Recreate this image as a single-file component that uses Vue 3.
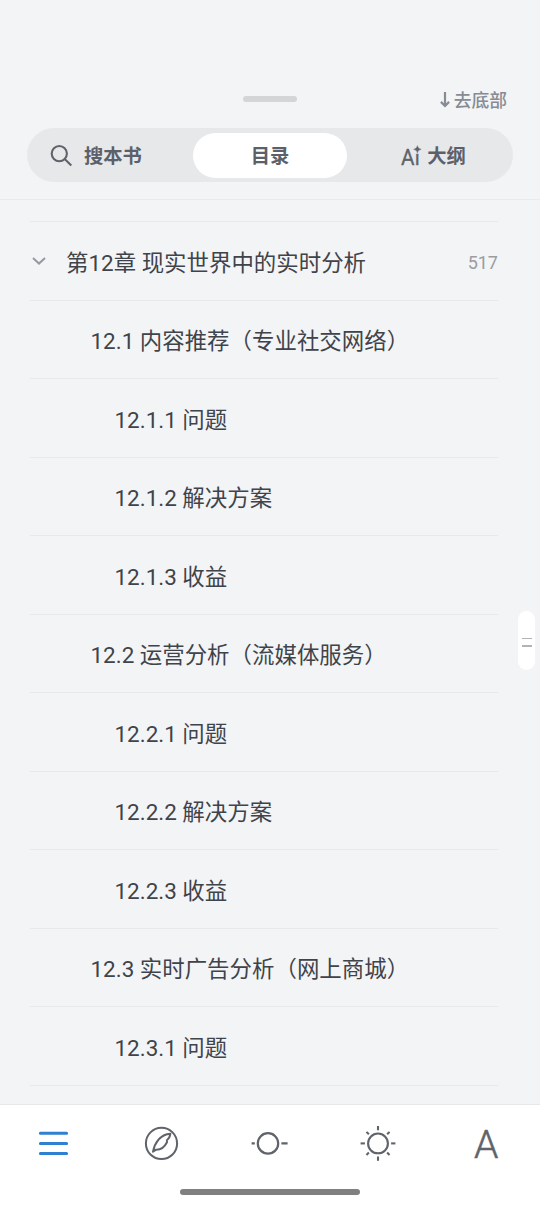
<script setup>

import { ref } from 'vue';

const activeTab = ref('toc');

const chapters = ref([
    { title: '第12章 现实世界中的实时分析', level: 1, page: 517 },
    { title: '12.1 内容推荐（专业社交网络）', level: 2 },
    { title: '12.1.1 问题', level: 3 },
    { title: '12.1.2 解决方案', level: 3 },
    { title: '12.1.3 收益', level: 3 },
    { title: '12.2 运营分析（流媒体服务）', level: 2 },
    { title: '12.2.1 问题', level: 3 },
    { title: '12.2.2 解决方案', level: 3 },
    { title: '12.2.3 收益', level: 3 },
    { title: '12.3 实时广告分析（网上商城）', level: 2 },
    { title: '12.3.1 问题', level: 3 },
]);

const rays = [0, 45, 90, 135, 180, 225, 270, 315];

</script>

<template>
    <div class="reader" lang="zh-CN">
        <header class="head">
            <div class="top">
                <span class="grip"></span>
                <button class="to-bottom">
                    <svg width="10" height="17" viewBox="0 0 10 17">
                        <path d="M5 1V15M0.9 10.9L5 15L9.1 10.9" fill="none" stroke="#868b94" stroke-width="2.2" />
                    </svg>
                    <span>去底部</span>
                </button>
            </div>
            <nav class="tabs">
                <button class="tab search" :class="{ active: activeTab === 'search' }" @click="activeTab = 'search'">
                    <svg width="22" height="22" viewBox="0 0 22 22" fill="none" stroke="#5f646b" stroke-width="2.1">
                        <circle cx="9.3" cy="8.6" r="7.6" />
                        <path d="M14.7 14L21.3 20.6" />
                    </svg>
                    <span>搜本书</span>
                </button>
                <button class="tab" :class="{ active: activeTab === 'toc' }" @click="activeTab = 'toc'">
                    <span>目录</span>
                </button>
                <button class="tab outline" :class="{ active: activeTab === 'outline' }" @click="activeTab = 'outline'">
                    <svg width="20" height="20" viewBox="0 0 20 20">
                        <text class="ai" x="0" y="19" textLength="13.5" lengthAdjust="spacingAndGlyphs">A</text>
                        <text class="ai small" x="13.8" y="19">ı</text>
                        <path d="M16.4 -0.4Q16.9 2.7 20.2 3.3Q16.9 3.9 16.4 7Q15.9 3.9 12.6 3.3Q15.9 2.7 16.4 -0.4Z" fill="#5f646b" stroke="#5f646b" stroke-width="0.4" />
                    </svg>
                    <span>大纲</span>
                </button>
            </nav>
        </header>

        <main class="list">
            <div v-for="(item, index) in chapters" :key="index" class="row" :class="'level-' + item.level">
                <svg v-if="item.level === 1" class="arrow" width="14" height="9" viewBox="0 0 14 9">
                    <path d="M1 2L7 7.6L13 2" fill="none" stroke="#969aa0" stroke-width="2" />
                </svg>
                <span class="title">{{ item.title }}</span>
                <span v-if="item.page" class="page">{{ item.page }}</span>
            </div>
        </main>

        <div class="scroller"><i></i><i></i></div>

        <footer class="foot">
            <div class="tools">
                <button>
                    <svg width="36" height="36" viewBox="0 0 36 36" stroke="#2f80d0" stroke-width="3" stroke-linecap="round">
                        <path d="M4.4 8.3H30.6M4.4 18.4H30.6M4.4 28.5H30.6" />
                    </svg>
                </button>
                <button>
                    <svg width="36" height="36" viewBox="0 0 36 36" fill="none" stroke="#5f646b" stroke-width="2">
                        <circle cx="17.5" cy="18.4" r="15.6" />
                        <path d="M9 26.7C10.5 18.9 15.8 9.2 26.4 8.7C26 11.6 24.8 13.8 22.9 15.2L23 17.2C20.6 21.9 16.8 24.8 12.2 24.7Z" stroke-linejoin="round" />
                    </svg>
                </button>
                <button>
                    <svg width="38" height="36" viewBox="0 0 38 36" fill="none" stroke="#5f646b" stroke-width="2.2">
                        <circle cx="18" cy="18.4" r="10.2" />
                        <path d="M1.6 18.4H4.8M31.4 18.4H37.6" />
                    </svg>
                </button>
                <button>
                    <svg width="36" height="36" viewBox="-19 -18.4 36 36" fill="none" stroke="#5f646b" stroke-width="2.1">
                        <circle cx="0" cy="0" r="9.9" />
                        <path v-for="ray in rays" :key="ray" :d="ray % 90 ? 'M0 -12.9V-16.3' : 'M0 -13.1V-17.4'" :transform="'rotate(' + ray + ')'" />
                    </svg>
                </button>
                <button class="font-icon">
                    <span>A</span>
                </button>
            </div>
            <div class="home"></div>
        </footer>
    </div>
</template>

<style>
body {
    background: #f3f4f6;
}
</style>

<style scoped>
.reader {
    position: relative;
    display: flex;
    flex-direction: column;
    height: 1206px;
    overflow: hidden;
    background: #f3f4f6;
    color: #3f434a;
    font-family: Roboto, "Noto Sans CJK SC", sans-serif;
}

button {
    display: flex;
    align-items: center;
    justify-content: center;
    padding: 0;
    border: 0;
    background: none;
    font: inherit;
    color: inherit;
}

svg {
    display: block;
    flex: none;
    overflow: visible;
}

.head {
    box-sizing: border-box;
    flex: none;
    height: 200px;
    padding: 84px 27px 0;
    border-bottom: 1px solid #e9eaec;
}

.top {
    display: grid;
    grid-template-columns: 1fr 54px 1fr;
    align-items: center;
    height: 29px;
}

.grip {
    grid-column: 2;
    height: 6px;
    border-radius: 3px;
    background: #d4d5d7;
}

.to-bottom {
    justify-self: end;
    gap: 4px;
    margin-right: 6px;
    font-size: 17.8px;
    line-height: 26px;
    font-weight: 500;
    color: #868b94;
}

.to-bottom span {
    padding-top: 4px;
}

.tabs {
    box-sizing: border-box;
    display: grid;
    grid-template-columns: 1fr 154px 1fr;
    height: 54px;
    margin-top: 15px;
    padding: 5px;
    border-radius: 27px;
    background: #e7e8ea;
}

.tab {
    height: 45px;
    border-radius: 23px;
    font-size: 19.3px;
    font-weight: bold;
    color: #5b606a;
}

.tab span {
    padding-bottom: 2px;
}

.tab.active {
    background: #fff;
}

.search {
    justify-content: flex-start;
    gap: 12px;
    padding-left: 18px;
}

.outline {
    gap: 6px;
    padding-left: 12px;
}

.ai {
    font: 400 22.5px Roboto, sans-serif;
    fill: #5f646b;
    stroke: #5f646b;
    stroke-width: 0.3px;
}

.ai.small {
    font-size: 20.5px;
}

.list {
    flex: 1;
    min-height: 0;
    padding: 21px 42px 0 30px;
    overflow: hidden;
}

.row {
    box-sizing: border-box;
    display: flex;
    align-items: center;
    height: 78.5px;
    border-top: 1px solid #e8e9eb;
    font-size: 22.45px;
    line-height: 34px;
    white-space: nowrap;
}

.row:last-child {
    height: 79.5px;
    border-bottom: 1px solid #e8e9eb;
}

.title {
    flex: 1;
    padding-top: 4px;
}

.level-1 {
    padding-left: 2px;
}

.level-2 {
    padding-left: 60.5px;
}

.level-3 {
    padding-left: 84.5px;
}

.arrow {
    margin-right: 20px;
}

.page {
    padding-top: 4px;
    font-size: 18px;
    color: #9a9da3;
}

/* floats over the right edge of the list */
.scroller {
    position: absolute;
    top: 611px;
    right: 5px;
    display: flex;
    flex-direction: column;
    align-items: center;
    justify-content: center;
    gap: 6px;
    width: 17px;
    height: 59px;
    padding-top: 3px;
    box-sizing: border-box;
    border-radius: 8.5px;
    background: #fff;
}

.scroller i {
    width: 10px;
    height: 1.5px;
    background: #b2b3b5;
}

.foot {
    box-sizing: border-box;
    flex: none;
    height: 102px;
    border-top: 1px solid #e7e8ea;
    background: #fff;
}

.tools {
    display: flex;
    height: 77px;
}

.tools button {
    flex: 1;
    padding-bottom: 1px;
}

.tools .font-icon {
    padding: 3px 0 0 1px;
    font-size: 39px;
    font-weight: 300;
    line-height: 46px;
    color: #5f646b;
    -webkit-text-stroke: 0.5px #5f646b;
}

.home {
    width: 180px;
    height: 6px;
    margin: 7px auto 0;
    border-radius: 3px;
    background: #808080;
}
</style>
